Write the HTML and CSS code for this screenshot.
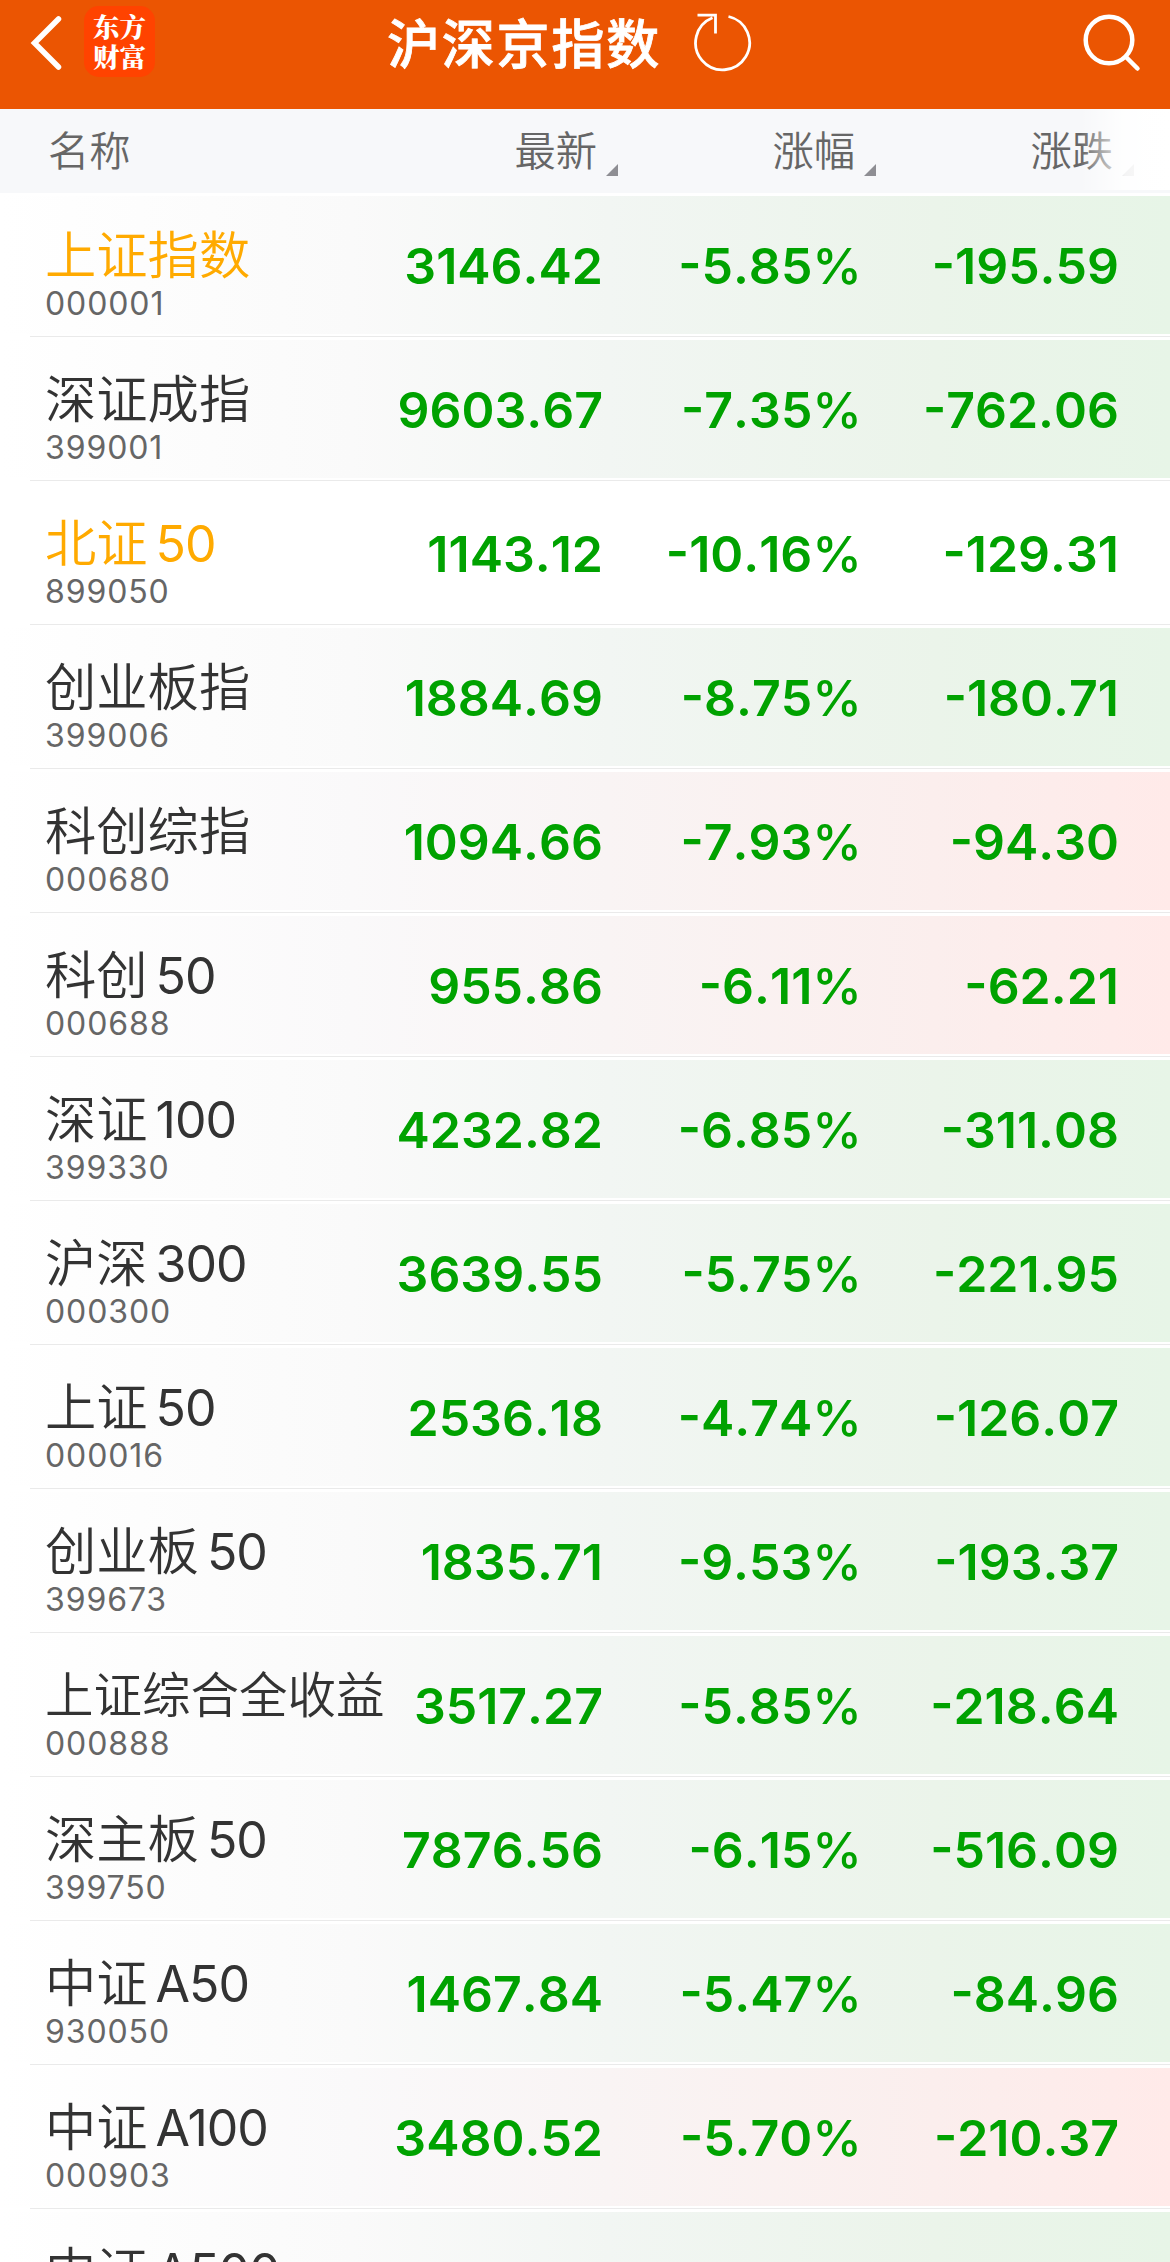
FILE: index.html
```html
<!DOCTYPE html>
<html lang="zh-CN">
<head>
<meta charset="UTF-8">
<title>沪深京指数</title>
<link rel="stylesheet" href="styles.css">
</head>

<body>

<div id="container">
	<div class="navbar">
		<div class="nav-left">
			<svg class="back-icon" width="32" height="56" viewBox="0 0 32 56"><path d="M28.500 4 L4.500 28 L28.500 52" fill="none" stroke="#fff" stroke-width="5.500" stroke-linecap="round" stroke-linejoin="miter"/></svg>
			<div class="logo"><span>东方</span><span>财富</span></div>
		</div>
		<div class="nav-title">
			<span class="title-text">沪深京指数</span>
			<svg class="refresh-icon" width="60" height="60" viewBox="0 0 60 60"><path d="M36.500 3.500 A27 27 0 1 1 20.500 4.800 M5.500 2.200 H23.500 V20.500" fill="none" stroke="#fff" stroke-width="2.800"/></svg>
		</div>
		<svg class="search-icon" width="60" height="60" viewBox="0 0 60 60"><circle cx="27" cy="27" r="23.300" fill="none" stroke="#fff" stroke-width="4.500"/><path d="M44.500 44.500 L55.500 55.500" stroke="#fff" stroke-width="4.500" stroke-linecap="round"/></svg>
	</div>

	<div class="head">
		<div class="head-name">名称</div>
		<div class="head-col">最新<i class="sort"></i></div>
		<div class="head-col">涨幅<i class="sort"></i></div>
		<div class="head-col">涨跌<i class="sort"></i></div>
		<div class="head-fade"></div>
	</div>

	<div class="row green">
		<div class="stock"><div class="name held">上证指数</div><div class="code">000001</div></div>
		<div class="num">3146.42</div><div class="num">-5.85<span>%</span></div><div class="num">-195.59</div>
	</div>
	<div class="row green">
		<div class="stock"><div class="name">深证成指</div><div class="code">399001</div></div>
		<div class="num">9603.67</div><div class="num">-7.35<span>%</span></div><div class="num">-762.06</div>
	</div>
	<div class="row">
		<div class="stock"><div class="name held">北证<b>50</b></div><div class="code">899050</div></div>
		<div class="num">1143.12</div><div class="num">-10.16<span>%</span></div><div class="num">-129.31</div>
	</div>
	<div class="row green">
		<div class="stock"><div class="name">创业板指</div><div class="code">399006</div></div>
		<div class="num">1884.69</div><div class="num">-8.75<span>%</span></div><div class="num">-180.71</div>
	</div>
	<div class="row red">
		<div class="stock"><div class="name">科创综指</div><div class="code">000680</div></div>
		<div class="num">1094.66</div><div class="num">-7.93<span>%</span></div><div class="num">-94.30</div>
	</div>
	<div class="row red">
		<div class="stock"><div class="name">科创<b>50</b></div><div class="code">000688</div></div>
		<div class="num">955.86</div><div class="num">-6.11<span>%</span></div><div class="num">-62.21</div>
	</div>
	<div class="row green">
		<div class="stock"><div class="name">深证<b>100</b></div><div class="code">399330</div></div>
		<div class="num">4232.82</div><div class="num">-6.85<span>%</span></div><div class="num">-311.08</div>
	</div>
	<div class="row green">
		<div class="stock"><div class="name">沪深<b>300</b></div><div class="code">000300</div></div>
		<div class="num">3639.55</div><div class="num">-5.75<span>%</span></div><div class="num">-221.95</div>
	</div>
	<div class="row green">
		<div class="stock"><div class="name">上证<b>50</b></div><div class="code">000016</div></div>
		<div class="num">2536.18</div><div class="num">-4.74<span>%</span></div><div class="num">-126.07</div>
	</div>
	<div class="row green">
		<div class="stock"><div class="name">创业板<b>50</b></div><div class="code">399673</div></div>
		<div class="num">1835.71</div><div class="num">-9.53<span>%</span></div><div class="num">-193.37</div>
	</div>
	<div class="row green">
		<div class="stock"><div class="name long">上证综合全收益</div><div class="code">000888</div></div>
		<div class="num">3517.27</div><div class="num">-5.85<span>%</span></div><div class="num">-218.64</div>
	</div>
	<div class="row green">
		<div class="stock"><div class="name">深主板<b>50</b></div><div class="code">399750</div></div>
		<div class="num">7876.56</div><div class="num">-6.15<span>%</span></div><div class="num">-516.09</div>
	</div>
	<div class="row green">
		<div class="stock"><div class="name">中证<b>A50</b></div><div class="code">930050</div></div>
		<div class="num">1467.84</div><div class="num">-5.47<span>%</span></div><div class="num">-84.96</div>
	</div>
	<div class="row red">
		<div class="stock"><div class="name">中证<b>A100</b></div><div class="code">000903</div></div>
		<div class="num">3480.52</div><div class="num">-5.70<span>%</span></div><div class="num">-210.37</div>
	</div>
	<div class="row green">
		<div class="stock"><div class="name">中证<b>A500</b></div></div>
	</div>
</div>

</body>
</html>
```
FILE: styles.css
```css
body {
	margin: 0;
	background-color: #ffffff;
	font-family: Inter, "Noto Sans CJK SC", sans-serif;
}

#container {
	width: 1170px;
	height: 2262px;
	overflow: hidden;
}

/* top bar */
.navbar {
	display: grid;
	grid-template-columns: 387px 1fr 90px;
	align-items: start;
	height: 109px;
	background-color: #eb5502;
	color: #ffffff;
}

.nav-left {
	display: flex;
	padding: 6px 0 0 30px;
}

.back-icon {
	margin: 9px 22px 0 0;
}

.logo {
	display: flex;
	flex-direction: column;
	align-items: center;
	box-sizing: border-box;
	width: 71px;
	height: 71px;
	padding-top: 5px;
	border-radius: 15px;
	background-color: #ff4300;
	font-family: "Noto Serif CJK SC", "Noto Sans CJK SC", serif;
	font-weight: 900;
	font-size: 26.5px;
	line-height: 30px;
}

.nav-title {
	display: flex;
}

.title-text {
	width: 305px;
	font-family: "Noto Sans CJK SC", sans-serif;
	font-weight: 500;
	font-size: 53px;
	letter-spacing: 1.8px;
	line-height: 82px;
	white-space: nowrap;
	-webkit-text-stroke: 0.8px #ffffff;
}

.refresh-icon {
	margin-top: 13px;
}

.search-icon {
	margin: 13px 0 0 2px;
}

/* column titles */
.head {
	position: relative;
	display: grid;
	grid-template-columns: 361px 257px 258px 258px;
	height: 84px;
	background-color: #f7f8fa;
	color: #666666;
	font-family: "Noto Sans CJK SC", sans-serif;
	font-weight: 350;
	font-size: 41.3px;
	line-height: 79px;
}

.head-name {
	padding-left: 48px;
}

.head-col {
	display: flex;
	justify-content: flex-end;
}

.sort {
	width: 12px;
	height: 12px;
	margin: 55px 0 0 9px;
	background-color: #8e8e93;
	clip-path: polygon(100% 0, 100% 100%, 0 100%);
}

.head-fade {
	position: absolute;
	top: 0;
	right: 0;
	width: 90px;
	height: 81px;
	background: linear-gradient(to right, rgba(255,255,255,0), rgba(255,255,255,0.9) 50%, #ffffff);
}

/* list */
.row {
	display: grid;
	grid-template-columns: 346px 257px 259px 257px;
	box-sizing: border-box;
	height: 144px;
	padding: 3px 0;
	background: linear-gradient(#eaeaea, #eaeaea) 30px 143px / 1140px 1px no-repeat;
}

.green {
	background: linear-gradient(#eaeaea, #eaeaea) 30px 143px / 1140px 1px no-repeat,
		linear-gradient(to right, #ffffff, #fafafa 30%, #f2f6f3 52%, #ebf4ea 80%, #e7f5e7) 0 3px / 100% 138px no-repeat;
}

.red {
	background: linear-gradient(#eaeaea, #eaeaea) 30px 143px / 1140px 1px no-repeat,
		linear-gradient(to right, #ffffff, #faf9fa 30%, #f9f4f4 52%, #fbeeed 80%, #ffeae9) 0 3px / 100% 138px no-repeat;
}

.stock {
	padding: 25px 0 0 45px;
	white-space: nowrap;
}

.name {
	height: 66px;
	color: #333333;
	font-family: "Noto Sans CJK SC", sans-serif;
	font-weight: 350;
	font-size: 51.3px;
	line-height: 62px;
}

.name b {
	margin-left: 8px;
	font-family: Inter, sans-serif;
	font-weight: 400;
	font-size: 50px;
	letter-spacing: -1px;
	line-height: 50px;
}

.held {
	color: #ffaa00;
}

.long {
	font-size: 48.5px;
}

.code {
	color: #666666;
	font-size: 32px;
	line-height: 34px;
	letter-spacing: 0.9px;
}

.num {
	color: #00a200;
	font-weight: 600;
	font-size: 50px;
	font-kerning: none;
	line-height: 140px;
	text-align: right;
}

.num span {
	font-weight: 500;
}
```
